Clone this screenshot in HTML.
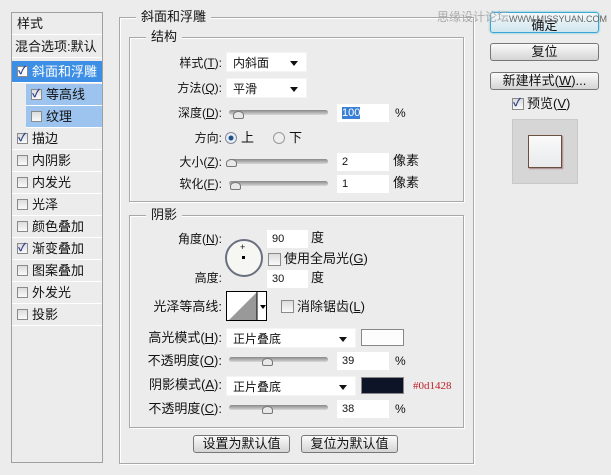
<!DOCTYPE html>
<html><head><meta charset="utf-8"><style>
*{margin:0;padding:0;box-sizing:border-box}
body{width:611px;height:475px;background:#ececec;font-family:"Liberation Sans","SimSun","Noto Sans CJK SC",sans-serif;font-size:12px;color:#111;position:relative;overflow:hidden}
.a{position:absolute;white-space:nowrap;line-height:14px}
.lbl{position:absolute;text-align:right;white-space:nowrap;line-height:14px}
.cb{position:absolute;width:11px;height:11px;border:1px solid #8a8a8a;background:linear-gradient(#dcdcdc,#fafafa)}
.cb.on::after{content:"✓";position:absolute;left:0px;top:-3px;font-size:11px;color:#2a3f8c;font-weight:bold;line-height:14px}
.li{position:absolute;left:12px;width:90px;height:22px;line-height:22px;border-bottom:1px solid #fff}
.li .cb{left:5px;top:5px}
.li span{position:absolute;left:20px}
.sel{position:absolute;background:#fff;height:20px;line-height:20px;padding-left:6px;border:1px solid #f4f4f4}
.sel::after{content:"";position:absolute;right:8px;top:8px;border:4px solid transparent;border-top:5px solid #111;border-bottom:0}
.inp{position:absolute;background:#fff;height:18px;line-height:18px;padding-left:5px;font-size:11px}
.sl{position:absolute;height:5px;border-radius:3px;background:linear-gradient(#888,#d8d8d8);width:99px}
.th{position:absolute;width:11px;height:8px;background:#e8e8e8;border:1px solid #777;border-radius:50% 50% 2px 2px}
.fs{position:absolute;border:1px solid #a8a8a8;box-shadow:1px 1px 0 #fff, inset 1px 1px 0 #fff}
.leg{position:absolute;background:#ececec;padding:0 5px;font-size:13px;line-height:16px}
.btn{position:absolute;border:1px solid #777;border-radius:3px;background:linear-gradient(#fafafa,#d4d4d4);text-align:center;font-size:13px}
</style></head><body>

<div class="a" style="left:11px;top:12px;width:92px;height:451px;border:1px solid #a0a0a0;background:#ececec"></div>
<div class="li" style="top:13px;padding-left:5px;font-size:13px">样式</div>
<div class="li" style="top:36px;padding-left:3px;font-size:13px">混合选项:默认</div>
<div class="li" style="top:61px;background:#3d8fe6;color:#fff;font-size:13px"><div class="cb on" style="background:#fff"></div><span>斜面和浮雕</span></div>
<div class="li" style="top:84px;left:26px;width:76px;background:#9cc4ef;font-size:13px"><div class="cb on"></div><span>等高线</span></div>
<div class="li" style="top:106px;left:26px;width:76px;background:#9cc4ef;font-size:13px"><div class="cb"></div><span>纹理</span></div>
<div class="li" style="top:128px;font-size:13px"><div class="cb on"></div><span>描边</span></div>
<div class="li" style="top:150px;font-size:13px"><div class="cb"></div><span>内阴影</span></div>
<div class="li" style="top:172px;font-size:13px"><div class="cb"></div><span>内发光</span></div>
<div class="li" style="top:194px;font-size:13px"><div class="cb"></div><span>光泽</span></div>
<div class="li" style="top:216px;font-size:13px"><div class="cb"></div><span>颜色叠加</span></div>
<div class="li" style="top:238px;font-size:13px"><div class="cb on"></div><span>渐变叠加</span></div>
<div class="li" style="top:260px;font-size:13px"><div class="cb"></div><span>图案叠加</span></div>
<div class="li" style="top:282px;font-size:13px"><div class="cb"></div><span>外发光</span></div>
<div class="li" style="top:304px;font-size:13px"><div class="cb"></div><span>投影</span></div>

<div class="fs" style="left:119px;top:17px;width:355px;height:447px"></div>
<div class="leg" style="left:136px;top:9px">斜面和浮雕</div>

<div class="fs" style="left:129px;top:37px;width:335px;height:165px"></div>
<div class="leg" style="left:146px;top:29px">结构</div>

<div class="lbl" style="right:389px;top:56px">样式(<u>T</u>):</div>
<div class="sel" style="left:226px;top:52px;width:81px">内斜面</div>
<div class="lbl" style="right:389px;top:81px">方法(<u>Q</u>):</div>
<div class="sel" style="left:226px;top:78px;width:81px">平滑</div>
<div class="lbl" style="right:389px;top:106px">深度(<u>D</u>):</div>
<div class="sl" style="left:229px;top:110px"></div><div class="th" style="left:233px;top:111px"></div>
<div class="inp" style="left:337px;top:104px;width:52px"><span style="background:#3a7fd6;color:#fff">100</span></div>
<div class="a" style="left:395px;top:106px">%</div>
<div class="lbl" style="right:389px;top:131px">方向:</div>
<div class="a" style="left:225px;top:132px;width:12px;height:12px;border-radius:50%;border:1px solid #889;background:radial-gradient(#1c4f8a 30%,#e8eef6 40%)"></div>
<div class="a" style="left:241px;top:131px;font-size:13px">上</div>
<div class="a" style="left:273px;top:132px;width:12px;height:12px;border-radius:50%;border:1px solid #999;background:#eee"></div>
<div class="a" style="left:289px;top:131px;font-size:13px">下</div>
<div class="lbl" style="right:389px;top:155px">大小(<u>Z</u>):</div>
<div class="sl" style="left:229px;top:159px"></div><div class="th" style="left:226px;top:159px"></div>
<div class="inp" style="left:337px;top:153px;width:52px">2</div>
<div class="a" style="left:393px;top:154px;font-size:13px">像素</div>
<div class="lbl" style="right:389px;top:177px">软化(<u>F</u>):</div>
<div class="sl" style="left:229px;top:181px"></div><div class="th" style="left:230px;top:182px"></div>
<div class="inp" style="left:337px;top:175px;width:52px">1</div>
<div class="a" style="left:393px;top:176px;font-size:13px">像素</div>

<div class="fs" style="left:129px;top:215px;width:335px;height:213px"></div>
<div class="leg" style="left:146px;top:207px">阴影</div>

<div class="lbl" style="right:389px;top:232px">角度(<u>N</u>):</div>
<div class="inp" style="left:267px;top:230px;width:41px">90</div>
<div class="a" style="left:311px;top:231px;font-size:13px">度</div>
<div class="a" style="left:225px;top:239px;width:38px;height:38px;border-radius:50%;border:2px solid #6a7080;background:#f6f6f2"></div>
<div class="a" style="left:240px;top:240px;font-size:9px">+</div>
<div class="a" style="left:242px;top:256px;width:3px;height:3px;background:#000"></div>
<div class="cb" style="left:268px;top:253px;width:13px;height:13px"></div>
<div class="a" style="left:284px;top:252px;font-size:13px">使用全局光(<u>G</u>)</div>
<div class="lbl" style="right:389px;top:271px">高度:</div>
<div class="inp" style="left:267px;top:270px;width:41px">30</div>
<div class="a" style="left:311px;top:271px;font-size:13px">度</div>
<div class="lbl" style="right:389px;top:300px;font-size:13px">光泽等高线:</div>
<div class="a" style="left:226px;top:291px;width:41px;height:30px;border:1px solid #000;background:#fff;overflow:hidden">
<svg width="41" height="30"><polygon points="1,29 30,0 30,29" fill="#999"/><line x1="30" y1="0" x2="30" y2="30" stroke="#000"/><polygon points="33,13 39,13 36,17" fill="#000"/></svg></div>
<div class="cb" style="left:281px;top:300px;width:13px;height:13px"></div>
<div class="a" style="left:297px;top:300px;font-size:13px">消除锯齿(<u>L</u>)</div>

<div class="lbl" style="right:389px;top:331px;font-size:13px">高光模式(<u>H</u>):</div>
<div class="sel" style="left:226px;top:328px;width:130px">正片叠底</div>
<div class="a" style="left:361px;top:329px;width:43px;height:17px;border:1px solid #888;background:#fdfdfd"></div>
<div class="lbl" style="right:389px;top:354px;font-size:13px">不透明度(<u>O</u>):</div>
<div class="sl" style="left:229px;top:357px"></div><div class="th" style="left:262px;top:358px"></div>
<div class="inp" style="left:337px;top:352px;width:52px">39</div>
<div class="a" style="left:395px;top:354px">%</div>
<div class="lbl" style="right:389px;top:378px;font-size:13px">阴影模式(<u>A</u>):</div>
<div class="sel" style="left:226px;top:376px;width:130px">正片叠底</div>
<div class="a" style="left:361px;top:377px;width:43px;height:17px;border:1px solid #888;background:#0d1428"></div>
<div class="a" style="left:413px;top:379px;font-size:11px;color:#c0202a;font-family:'Liberation Serif',serif">#0d1428</div>
<div class="lbl" style="right:389px;top:402px;font-size:13px">不透明度(<u>C</u>):</div>
<div class="sl" style="left:229px;top:405px"></div><div class="th" style="left:262px;top:406px"></div>
<div class="inp" style="left:337px;top:400px;width:52px">38</div>
<div class="a" style="left:395px;top:402px">%</div>

<div class="btn" style="left:193px;top:435px;width:97px;height:18px;line-height:16px">设置为默认值</div>
<div class="btn" style="left:301px;top:435px;width:97px;height:18px;line-height:16px">复位为默认值</div>

<div class="btn" style="left:490px;top:12px;width:109px;height:21px;line-height:26px;border:1px solid #3aa6d6;background:linear-gradient(#f4f8fa,#cfe6ef);box-shadow:0 0 2px #5bc">确定</div>
<div class="a" style="left:437px;top:10px;color:#aaa;font-size:12px">思缘设计论坛</div>
<div class="a" style="left:509px;top:12px;font-size:9px;color:#666">WWW.MISSYUAN.COM</div>
<div class="btn" style="left:490px;top:43px;width:109px;height:18px;line-height:16px">复位</div>
<div class="btn" style="left:490px;top:72px;width:109px;height:18px;line-height:16px">新建样式(<u>W</u>)...</div>
<div class="cb on" style="left:512px;top:98px;width:12px;height:12px"></div>
<div class="a" style="left:527px;top:97px;font-size:13px">预览(<u>V</u>)</div>
<div class="a" style="left:512px;top:119px;width:66px;height:65px;background:#d6d6d6;border:1px solid #c8c8c8"></div>
<div class="a" style="left:528px;top:135px;width:34px;height:33px;background:linear-gradient(#fafafa,#e8eaec);border:1px solid #6b5040;box-shadow:1px 1px 1px #a88"></div>
</body></html>
